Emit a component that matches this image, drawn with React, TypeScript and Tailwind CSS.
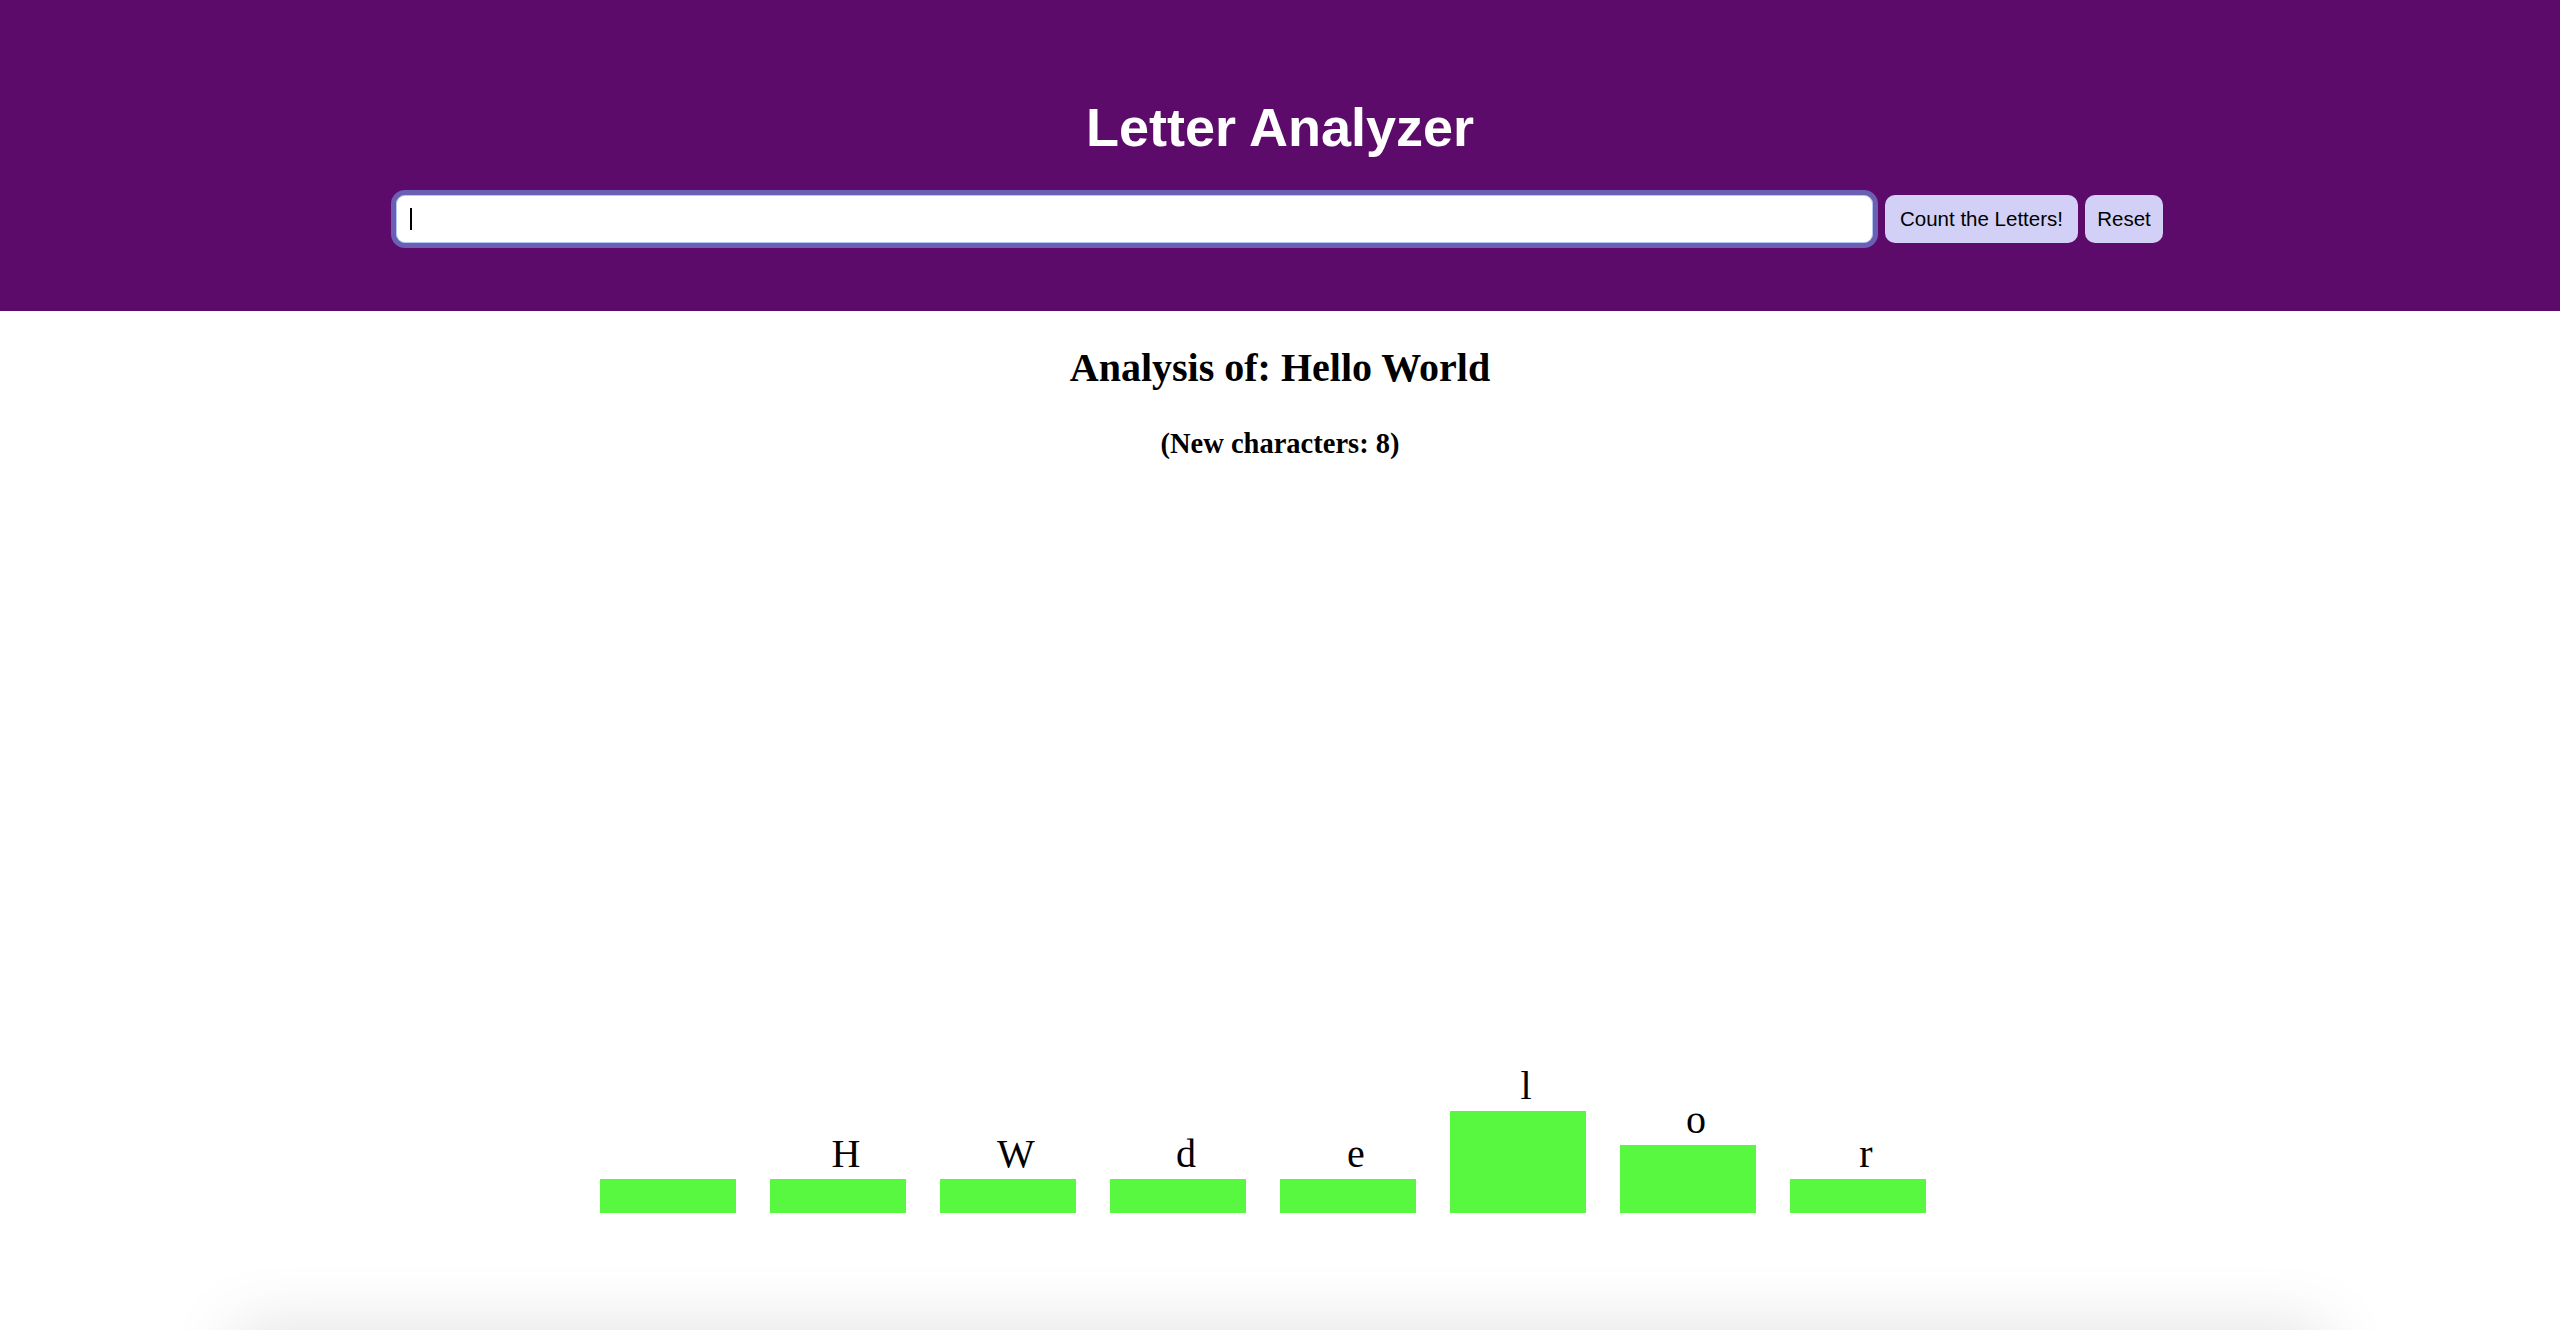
const counts: [string, number][] = [
  [" ", 1],
  ["H", 1],
  ["W", 1],
  ["d", 1],
  ["e", 1],
  ["l", 3],
  ["o", 2],
  ["r", 1],
];

const Bar = ({ letter, count }: { letter: string; count: number }) => {
  return (
    <div className="flex flex-col w-[136px] mr-[34px]">
      <div className="h-[46px] leading-[46px] text-[40px] text-center pl-[16px] mb-[2px] font-['Liberation_Serif',serif] text-black whitespace-pre">
        {letter}
      </div>
      <div className="w-full bg-[#58f840]" style={{ height: count * 34 }} />
    </div>
  );
};

export default function App() {
  return (
    <div className="w-full h-[1330px] overflow-hidden bg-white flex flex-col">
      <div className="h-[311px] bg-[#5c0b6b] flex flex-col items-center pt-[96px]">
        <h1 className="text-[54px] leading-[62px] font-bold text-white font-['Liberation_Sans',Arial,sans-serif]">
          Letter Analyzer
        </h1>
        <div className="flex items-center gap-[7px] mt-[32px] pr-[6px] font-['Liberation_Sans',Arial,sans-serif]">
          <div className="w-[1487px] h-[58px] rounded-[14px] border-[5px] border-[#6b5fb3] bg-white shadow-[inset_0_0_0_1px_#b4c8f5] flex items-center pl-[14px]">
            <span className="w-[2px] h-[22px] bg-black" />
            <input className="flex-1 h-full bg-transparent outline-none text-[20px] px-1" aria-label="text" />
          </div>
          <button className="w-[193px] h-[48px] rounded-[10px] bg-[#d2d0f6] text-[20.5px] text-black">
            Count the Letters!
          </button>
          <button className="w-[78px] h-[48px] rounded-[10px] bg-[#d2d0f6] text-[20.5px] text-black">
            Reset
          </button>
        </div>
      </div>

      <div className="flex flex-col items-center font-['Liberation_Serif','Times_New_Roman',serif] text-black">
        <h2 className="mt-[34px] text-[40px] leading-[46px] font-bold">Analysis of: Hello World</h2>
        <h3 className="mt-[36px] text-[28.5px] leading-[34px] font-bold">(New characters: 8)</h3>
      </div>

      <div className="h-[752px] flex items-end justify-center">
        {counts.map(([letter, count]) => (
          <Bar key={letter} letter={letter} count={count} />
        ))}
      </div>

      <div className="h-[117px] overflow-hidden">
        <div className="mt-[117px] mx-[235px] h-[120px] bg-white shadow-[0_0_70px_rgba(0,0,0,0.13)]" />
      </div>
    </div>
  );
}
